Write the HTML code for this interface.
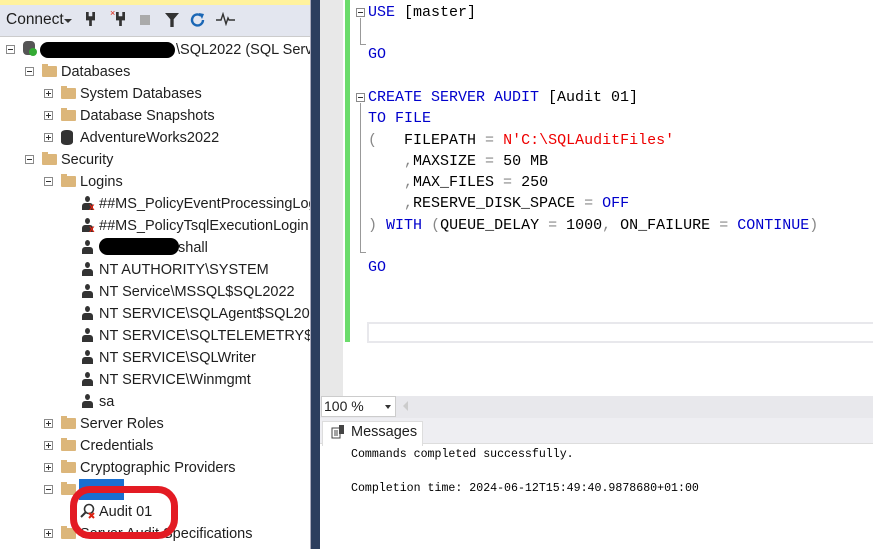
<!DOCTYPE html>
<html><head><meta charset="utf-8"><style>
*{margin:0;padding:0;box-sizing:border-box}
body{width:873px;height:549px;overflow:hidden;position:relative;background:#fff;font-family:"Liberation Sans",sans-serif}
.a{position:absolute;white-space:pre}
.t{font-size:14.5px;color:#1e1e1e;line-height:22px;margin-top:1px}
.bx{position:absolute;width:9px;height:9px;border:1px solid #8a8a8a;background:#fff}
.bx:before{content:"";position:absolute;left:1px;top:3px;width:5px;height:1px;background:#333}
.bx.p:after{content:"";position:absolute;left:3px;top:1px;width:1px;height:5px;background:#333}
.f{position:absolute;width:15px;height:11px;background:#dcb67a;border-radius:1px}
.f:before{content:"";position:absolute;left:0;top:-2px;width:6px;height:3px;background:#dcb67a}
.u{position:absolute;width:11px;height:14px}
.u:before{content:"";position:absolute;left:3px;top:0;width:5px;height:6px;border-radius:50%;background:#333}
.u:after{content:"";position:absolute;left:0;top:7px;width:11px;height:7px;background:#333;border-radius:3px 3px 0 0}
.x{position:absolute;color:#d21;font-size:10px;font-weight:bold;line-height:10px}
.c{font-family:"Liberation Mono",monospace;font-size:15px;line-height:21px;color:#000}
.k{color:#00c}.s{color:#e00}.g{color:#888}
</style></head><body>
<div class="a" style="left:0;top:0;width:311px;height:5px;background:#fff29d"></div>
<div class="a" style="left:0;top:5px;width:311px;height:32px;background:#e3e6ef;border-bottom:1px solid #ccc"></div>
<div class="a" style="left:6px;top:11px;font-size:15.5px;color:#1e1e1e">Connect</div>
<div class="a" style="left:64px;top:19px;border:4px solid transparent;border-top:4px solid #333"></div>
<div class="a" style="left:86px;top:12px;width:9px;height:14px;background:#333;border-radius:0 0 3px 3px;clip-path:polygon(0 0,30% 0,30% 30%,70% 30%,70% 0,100% 0,100% 60%,65% 60%,65% 100%,35% 100%,35% 60%,0 60%)"></div>
<div class="a" style="left:110px;top:8px;color:#d21;font-size:9px">×</div>
<div class="a" style="left:116px;top:12px;width:9px;height:14px;background:#333;clip-path:polygon(0 0,30% 0,30% 30%,70% 30%,70% 0,100% 0,100% 60%,65% 60%,65% 100%,35% 100%,35% 60%,0 60%)"></div>
<div class="a" style="left:140px;top:15px;width:10px;height:10px;background:#aaa"></div>
<div class="a" style="left:165px;top:13px;width:14px;height:14px;background:#333;clip-path:polygon(0 0,100% 0,62% 45%,62% 100%,38% 100%,38% 45%)"></div>
<svg class="a" style="left:189px;top:11px" width="18" height="18"><path d="M14 9a5.5 5.5 0 1 1-2-4.3" fill="none" stroke="#1b67b5" stroke-width="2.4"/><path d="M10 2l5 1-2 5z" fill="#1b67b5"/></svg>
<svg class="a" style="left:216px;top:12px" width="20" height="14"><path d="M0 8h5l2-6 3 10 2-6 1 2h6" fill="none" stroke="#333" stroke-width="1.4"/></svg>
<div class="a" style="left:0;top:38px;width:311px;height:511px;background:#fff"></div>

<div class="bx" style="left:6px;top:45px"></div>
<div class="a" style="left:23px;top:41px;width:12px;height:14px;background:#555;border-radius:4px"></div>
<div class="a" style="left:29px;top:48px;width:8px;height:8px;background:#3a3;border-radius:50%"></div>
<div class="a" style="left:40px;top:42px;width:135px;height:16px;background:#000;border-radius:8px"></div>
<div class="a t" style="left:176px;top:38px">\SQL2022 (SQL Serve</div>

<div class="bx" style="left:25px;top:67px"></div><div class="f" style="left:42px;top:66px"></div><div class="a t" style="left:61px;top:60px">Databases</div>
<div class="bx p" style="left:44px;top:89px"></div><div class="f" style="left:61px;top:88px"></div><div class="a t" style="left:80px;top:82px">System Databases</div>
<div class="bx p" style="left:44px;top:111px"></div><div class="f" style="left:61px;top:110px"></div><div class="a t" style="left:80px;top:104px">Database Snapshots</div>
<div class="bx p" style="left:44px;top:133px"></div><div class="a" style="left:61px;top:130px;width:12px;height:15px;background:#333;border-radius:5px/3px"></div><div class="a t" style="left:80px;top:126px">AdventureWorks2022</div>
<div class="bx" style="left:25px;top:155px"></div><div class="f" style="left:42px;top:154px"></div><div class="a t" style="left:61px;top:148px">Security</div>
<div class="bx" style="left:44px;top:177px"></div><div class="f" style="left:61px;top:176px"></div><div class="a t" style="left:80px;top:170px">Logins</div>

<div class="u" style="left:82px;top:196px"></div><div class="x" style="left:89px;top:203px">x</div><div class="a t" style="left:99px;top:192px">##MS_PolicyEventProcessingLog</div>
<div class="u" style="left:82px;top:218px"></div><div class="x" style="left:89px;top:225px">x</div><div class="a t" style="left:99px;top:214px">##MS_PolicyTsqlExecutionLogin</div>
<div class="u" style="left:82px;top:240px"></div><div class="a" style="left:99px;top:238px;width:80px;height:17px;background:#000;border-radius:9px"></div><div class="a t" style="left:178px;top:236px">shall</div>
<div class="u" style="left:82px;top:262px"></div><div class="a t" style="left:99px;top:258px">NT AUTHORITY\SYSTEM</div>
<div class="u" style="left:82px;top:284px"></div><div class="a t" style="left:99px;top:280px">NT Service\MSSQL$SQL2022</div>
<div class="u" style="left:82px;top:306px"></div><div class="a t" style="left:99px;top:302px">NT SERVICE\SQLAgent$SQL2022</div>
<div class="u" style="left:82px;top:328px"></div><div class="a t" style="left:99px;top:324px">NT SERVICE\SQLTELEMETRY$SQ</div>
<div class="u" style="left:82px;top:350px"></div><div class="a t" style="left:99px;top:346px">NT SERVICE\SQLWriter</div>
<div class="u" style="left:82px;top:372px"></div><div class="a t" style="left:99px;top:368px">NT SERVICE\Winmgmt</div>
<div class="u" style="left:82px;top:394px"></div><div class="a t" style="left:99px;top:390px">sa</div>
<div class="bx p" style="left:44px;top:419px"></div><div class="f" style="left:61px;top:418px"></div><div class="a t" style="left:80px;top:412px">Server Roles</div>
<div class="bx p" style="left:44px;top:441px"></div><div class="f" style="left:61px;top:440px"></div><div class="a t" style="left:80px;top:434px">Credentials</div>
<div class="bx p" style="left:44px;top:463px"></div><div class="f" style="left:61px;top:462px"></div><div class="a t" style="left:80px;top:456px">Cryptographic Providers</div>
<div class="bx" style="left:44px;top:485px"></div><div class="f" style="left:61px;top:484px"></div><div class="a" style="left:79px;top:479px;width:45px;height:21px;background:#1a6fd0"></div>
<svg class="a" style="left:80px;top:503px" width="16" height="16"><circle cx="9" cy="6" r="4.5" fill="none" stroke="#333" stroke-width="1.6"/><path d="M6 9L1 14" stroke="#333" stroke-width="2"/><path d="M9 10l5 5M14 10l-5 5" stroke="#d21" stroke-width="2"/></svg>
<div class="a t" style="left:99px;top:500px">Audit 01</div>
<div class="bx p" style="left:44px;top:529px"></div><div class="f" style="left:61px;top:528px"></div><div class="a t" style="left:80px;top:522px">Server Audit Specifications</div>
<div class="a" style="left:70px;top:486px;width:108px;height:53px;border:7px solid #e31b23;border-radius:20px"></div>

<div class="a" style="left:310px;top:0;width:10px;height:549px;background:#2d3e5e"></div>
<div class="a" style="left:310px;top:0;width:1px;height:549px;background:#aab"></div>

<div class="a" style="left:320px;top:0;width:553px;height:396px;background:#fff"></div>
<div class="a" style="left:320px;top:0;width:23px;height:396px;background:#e8e8e8"></div>
<div class="a" style="left:345px;top:0;width:5px;height:342px;background:#6bdc6b"></div>
<div class="a" style="left:367px;top:322px;width:506px;height:21px;border:2px solid #e8e8ec;border-right:none"></div>
<div class="bx" style="left:356px;top:8px"></div>
<div class="a" style="left:360px;top:18px;width:6px;height:27px;border-left:1px solid #999;border-bottom:1px solid #999"></div>
<div class="bx" style="left:356px;top:93px"></div>
<div class="a" style="left:360px;top:103px;width:6px;height:150px;border-left:1px solid #999;border-bottom:1px solid #999"></div>
<div class="a c" style="left:368px;top:2px"><span class="k">USE</span> [master]</div>
<div class="a c" style="left:368px;top:44px"><span class="k">GO</span></div>
<div class="a c" style="left:368px;top:87px"><span class="k">CREATE SERVER AUDIT</span> [Audit 01]</div>
<div class="a c" style="left:368px;top:108px"><span class="k">TO FILE</span></div>
<div class="a c" style="left:368px;top:130px"><span class="g">(</span>   FILEPATH <span class="g">=</span> <span class="s">N'C:\SQLAuditFiles'</span></div>
<div class="a c" style="left:368px;top:151px">    <span class="g">,</span>MAXSIZE <span class="g">=</span> 50 MB</div>
<div class="a c" style="left:368px;top:172px">    <span class="g">,</span>MAX_FILES <span class="g">=</span> 250</div>
<div class="a c" style="left:368px;top:193px">    <span class="g">,</span>RESERVE_DISK_SPACE <span class="g">=</span> <span class="k">OFF</span></div>
<div class="a c" style="left:368px;top:215px"><span class="g">)</span> <span class="k">WITH</span> <span class="g">(</span>QUEUE_DELAY <span class="g">=</span> 1000<span class="g">,</span> ON_FAILURE <span class="g">=</span> <span class="k">CONTINUE</span><span class="g">)</span></div>
<div class="a c" style="left:368px;top:257px"><span class="k">GO</span></div>

<div class="a" style="left:320px;top:396px;width:553px;height:22px;background:#e8e8ec"></div>
<div class="a" style="left:321px;top:396px;width:75px;height:21px;background:#fff;border:1px solid #ccc"></div>
<div class="a" style="left:324px;top:398px;font-size:14px;color:#1e1e1e">100 %</div>
<div class="a" style="left:385px;top:405px;border:3.5px solid transparent;border-top:4px solid #333"></div>
<div class="a" style="left:403px;top:401px;border:5px solid transparent;border-right:5px solid #ccc;border-left:none"></div>
<div class="a" style="left:320px;top:418px;width:553px;height:26px;background:#eeeef2;border-bottom:1px solid #ddd"></div>
<div class="a" style="left:322px;top:421px;width:101px;height:25px;background:#fff;border:1px solid #ddd;border-bottom:none"></div>
<svg class="a" style="left:331px;top:425px" width="14" height="14"><rect x="1" y="3" width="8" height="10" fill="none" stroke="#444"/><path d="M3 6h4M3 8h4M3 10h4" stroke="#444"/><rect x="8" y="0" width="5" height="9" fill="#444"/></svg>
<div class="a" style="left:351px;top:424px;font-size:14.5px;color:#1e1e1e">Messages</div>
<div class="a" style="left:351px;top:448px;font-family:'Liberation Mono',monospace;font-size:11.6px;color:#000">Commands completed successfully.</div>
<div class="a" style="left:351px;top:482px;font-family:'Liberation Mono',monospace;font-size:11.6px;color:#000">Completion time: 2024-06-12T15:49:40.9878680+01:00</div>
</body></html>
